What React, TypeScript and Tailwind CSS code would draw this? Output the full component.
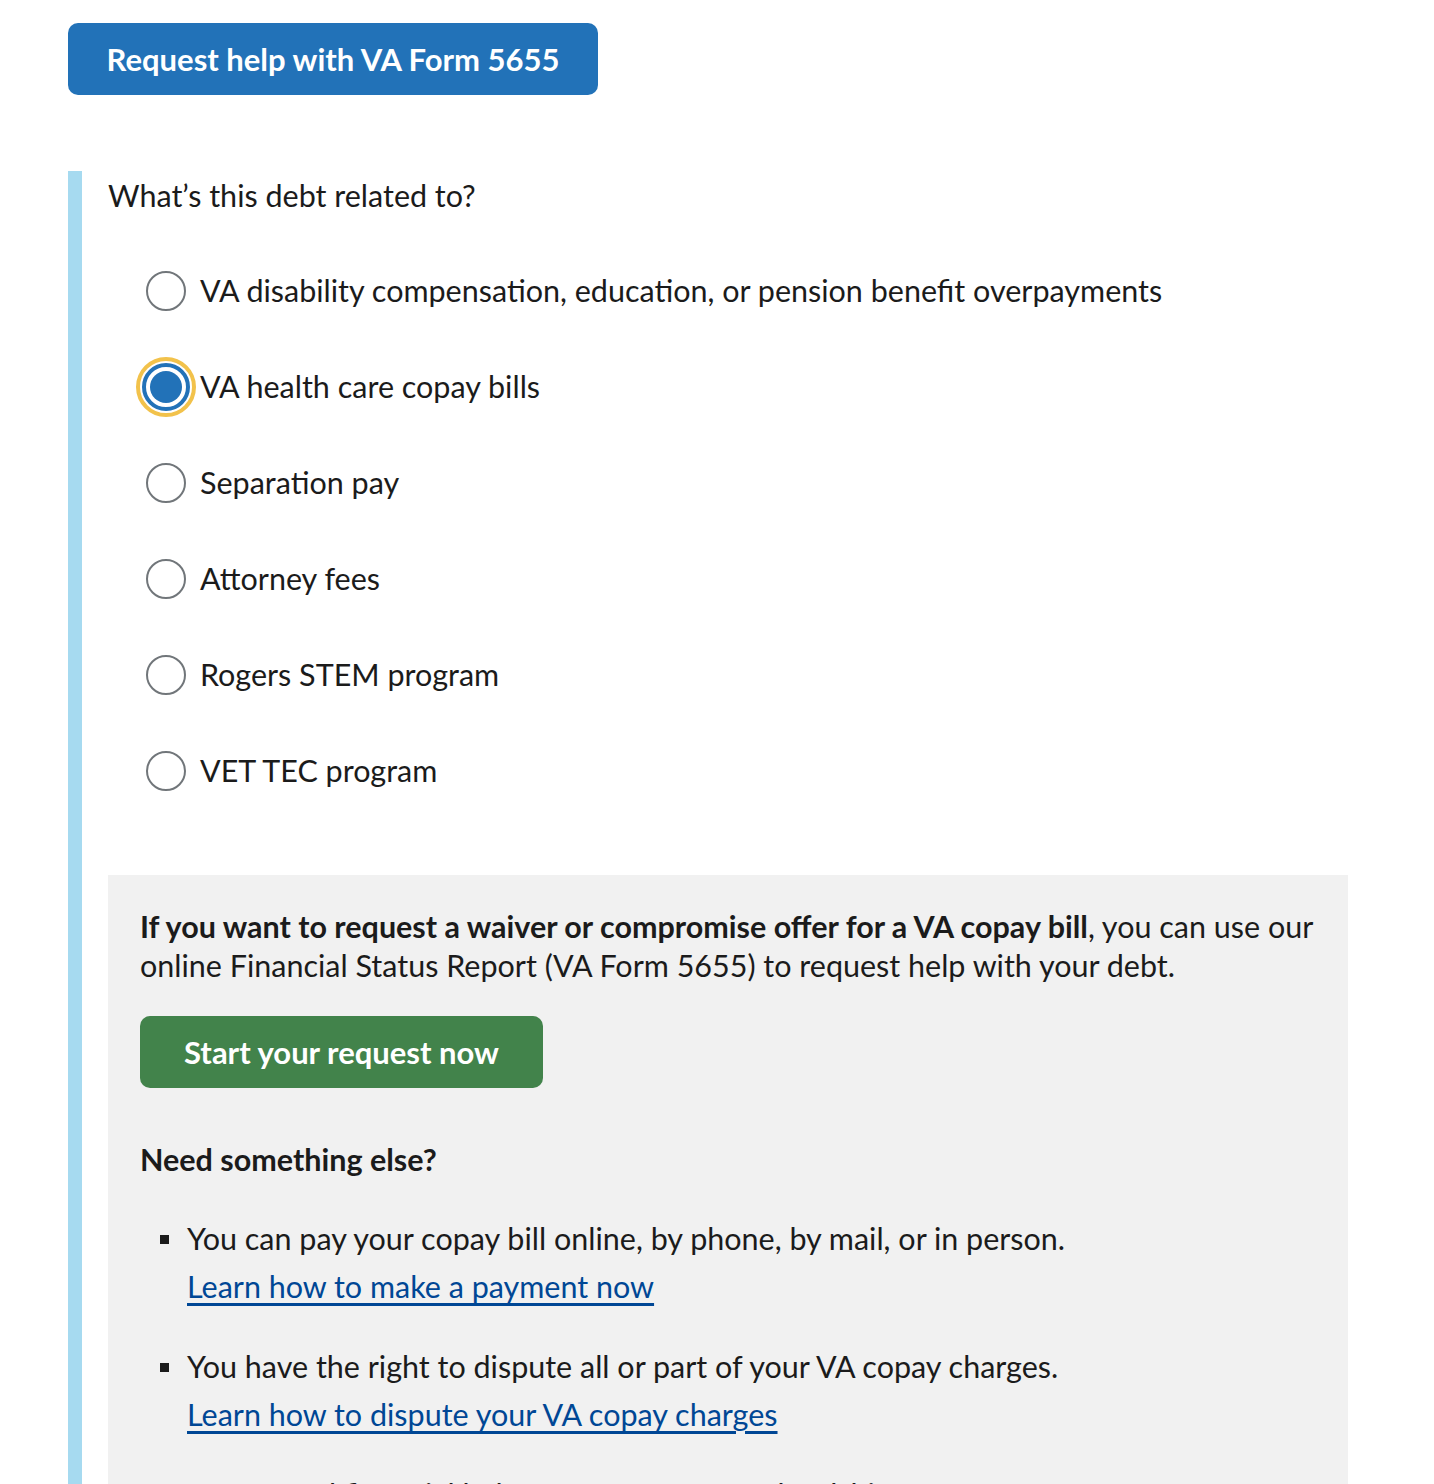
import React from "react";

const options = [
    "VA disability compensation, education, or pension benefit overpayments",
    "VA health care copay bills",
    "Separation pay",
    "Attorney fees",
    "Rogers STEM program",
    "VET TEC program",
];

const Radio = ({ checked }: { checked: boolean }) => {
    if (checked) {
        return (
            <span className="flex h-[60px] w-[60px] shrink-0 items-center justify-center rounded-full border-[4px] border-[#f2c24b]">
                <span className="flex h-[48px] w-[48px] items-center justify-center rounded-full border-[4px] border-[#2272b8] bg-white">
                    <span className="h-[32px] w-[32px] rounded-full bg-[#2272b8]" />
                </span>
            </span>
        );
    }
    return (
        <span className="flex h-[60px] w-[60px] shrink-0 items-center justify-center">
            <span className="h-[40px] w-[40px] rounded-full border-2 border-[#71767a] bg-white" />
        </span>
    );
};

const bullets = [
    {
        text: "You can pay your copay bill online, by phone, by mail, or in person.",
        link: "Learn how to make a payment now",
    },
    {
        text: "You have the right to dispute all or part of your VA copay charges.",
        link: "Learn how to dispute your VA copay charges",
    },
    {
        text: "If you need financial help, you can request a hardship or pause your copay payments.",
        link: "Learn about financial hardship assistance",
    },
];

export default function App() {
    return (
        <div className="min-h-screen bg-white text-[#1b1b1b] font-['Lato','Liberation_Sans',sans-serif]">
            <div className="pl-[68px] pr-[86px] pt-[23px]">
                <button className="h-[72px] w-[530px] rounded-[10px] bg-[#2272b8] text-[31px] font-bold text-white">
                    Request help with VA Form 5655
                </button>

                <div className="mt-[76px] border-l-[14px] border-[#a6daf0] pl-[26px]">
                    <p className="pt-[4px] text-[30.5px] leading-[40px]">What’s this debt related to?</p>

                    <div className="mt-[46px] flex flex-col gap-[36px] pl-[28px]">
                        {options.map((opt, i) => (
                            <label key={opt} className="flex h-[60px] items-center gap-[4px]">
                                <Radio checked={i === 1} />
                                <span className="text-[30.5px]">{opt}</span>
                            </label>
                        ))}
                    </div>

                    <div className="mt-[74px] w-[1240px] bg-[#f1f1f1] px-[32px] pt-[32px] pb-[60px]">
                        <p className="text-[30.5px] leading-[39px]">
                            <strong>If you want to request a waiver or compromise offer for a VA copay bill</strong>, you can use our online Financial Status Report (VA Form 5655) to request help with your debt.
                        </p>
                        <button className="mt-[31px] h-[72px] w-[403px] rounded-[10px] bg-[#42834b] text-[31px] font-bold text-white">
                            Start your request now
                        </button>
                        <h3 className="mt-[51px] text-[30.5px] font-bold leading-[40px]">Need something else?</h3>
                        <ul className="mt-[39px] flex flex-col gap-[40px] pl-[20px]">
                            {bullets.map((b) => (
                                <li key={b.link} className="flex gap-[18px]">
                                    <span className="mt-[17px] h-[9px] w-[9px] shrink-0 bg-[#1b1b1b]" />
                                    <div className="text-[30.5px] leading-[40px]">
                                        <p>{b.text}</p>
                                        <a href="#" className="mt-[8px] block text-[#004795] underline underline-offset-[5px]">
                                            {b.link}
                                        </a>
                                    </div>
                                </li>
                            ))}
                        </ul>
                    </div>
                </div>
            </div>
        </div>
    );
}
